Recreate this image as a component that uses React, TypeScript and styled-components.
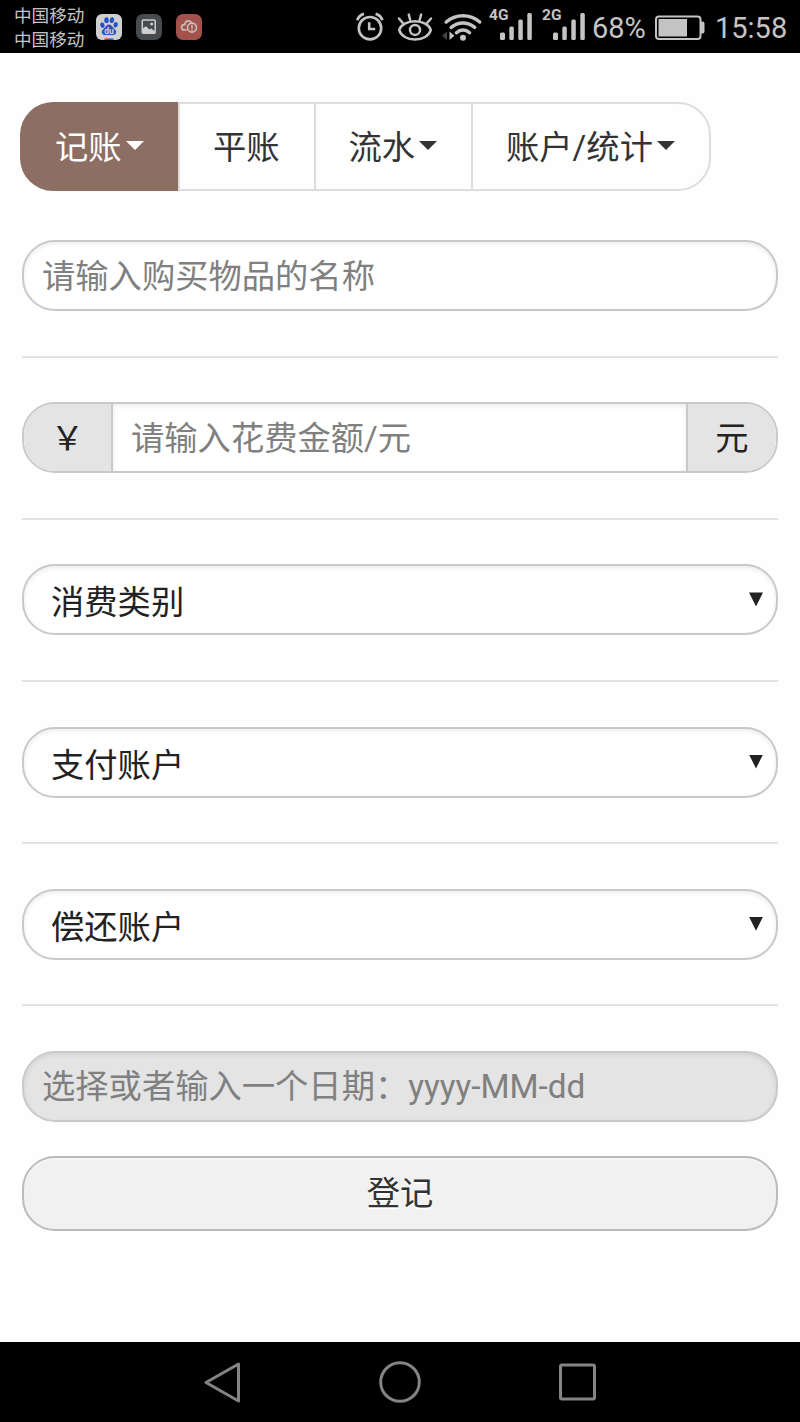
import React from 'react';
import styled, { createGlobalStyle } from 'styled-components';

const GlobalStyle = createGlobalStyle`
  * { box-sizing: border-box; }
  body {
    margin: 0;
    background: #fefefe;
    font-family: Roboto, 'Noto Sans CJK SC', sans-serif;
    font-size: 33.3px;
    color: #222;
  }
  input, button, select { font: inherit; color: inherit; margin: 0; outline: none; }
`;

const Screen = styled.div`
  width: 800px;
  height: 1422px;
  display: flex;
  flex-direction: column;
  overflow: hidden;
`;

const StatusBar = styled.header`
  height: 53px;
  flex: none;
  background: #000;
  color: #c4c4c4;
  display: flex;
  justify-content: space-between;
  padding: 0 12px 0 14px;
`;

const StatusGroup = styled.div`
  display: flex;
  align-items: center;
`;

const Carriers = styled.div`
  font-size: 17.6px;
  line-height: 24px;
  width: 72px;
  margin-right: 10px;
  padding-top: 2px;
  white-space: nowrap;
`;

const Notifications = styled.div`
  display: flex;
  gap: 14px;
`;

const Slot = styled.div<{ $w: number; $gap?: number }>`
  width: ${(p) => p.$w}px;
  margin-left: ${(p) => p.$gap ?? 0}px;
  height: 53px;
  flex: none;
  svg { display: block; }
`;

const SignalSlot = styled(Slot)`
  display: flex;
  align-items: flex-start;
`;

const Network = styled.span`
  width: 20px;
  margin-right: -9px;
  flex: none;
  font: 700 15.5px/16px Roboto, sans-serif;
  padding-top: 7px;
`;

const StatusText = styled.span<{ $w: number; $gap: number }>`
  width: ${(p) => p.$w}px;
  margin-left: ${(p) => p.$gap}px;
  font-size: 29px;
  line-height: 34px;
  padding-top: 3px;
  white-space: nowrap;
`;

const Page = styled.main`
  flex: 1;
  padding: 49px 22px 0;
`;

const Tabs = styled.nav`
  display: flex;
  width: 691px;
  height: 89px;
  margin: 0 0 49px -2px;
`;

const Tab = styled.button<{ $w: number; $active?: boolean }>`
  width: ${(p) => p.$w}px;
  height: 89px;
  flex: none;
  display: flex;
  align-items: center;
  padding: 0 0 4px ${(p) => (p.$active ? 35 : 33)}px;
  white-space: nowrap;
  color: ${(p) => (p.$active ? '#fff' : '#333')};
  background: ${(p) => (p.$active ? '#8c6e63' : 'transparent')};
  border: solid ${(p) => (p.$active ? '#8c6e63' : '#ddd')};
  border-width: ${(p) => (p.$active ? '0' : '2px 0 2px 2px')};
  &:first-child { border-radius: 33px 0 0 33px; }
  &:last-child { border-right-width: 2px; border-radius: 0 33px 33px 0; }
`;

const Caret = styled.i`
  margin: 2px 0 0 4px;
  border: 9px solid transparent;
  border-top-color: currentColor;
  border-bottom: 0;
`;

const fieldShape = `
  display: block;
  width: 100%;
  height: 71px;
  border: 2px solid #c9c9c9;
  border-radius: 33px;
`;

const innerShadow = 'box-shadow: inset 0 2px 5px rgba(0, 0, 0, 0.08);';

const Field = styled.input`
  ${fieldShape}
  ${innerShadow}
  padding: 1px 18px 0;
  background: #fff;
  &::placeholder { color: #808080; opacity: 1; }
  &:disabled { background: #e4e4e4; }
`;

const Divider = styled.hr`
  height: 2px;
  border: 0;
  background: #e3e3e3;
  margin: 44.6px 0;
`;

const AmountGroup = styled.div`
  ${fieldShape}
  display: flex;
  overflow: hidden;
`;

const AmountField = styled.input`
  flex: 1;
  min-width: 0;
  border: solid #c9c9c9;
  border-width: 0 2px;
  padding: 1px 18px 0;
  background: #fff;
  ${innerShadow}
  &::placeholder { color: #808080; opacity: 1; }
`;

const Addon = styled.span<{ $w: number }>`
  width: ${(p) => p.$w}px;
  flex: none;
  display: flex;
  align-items: center;
  justify-content: center;
  padding-bottom: 4px;
  background: #e4e4e4;
`;

const SelectBox = styled.div`
  ${fieldShape}
  ${innerShadow}
  display: flex;
  align-items: center;
  justify-content: space-between;
  padding: 0 13px 0 27px;
  background: #fff;
`;

const SelectArrow = styled.i`
  width: 14px;
  height: 14px;
  margin-top: -1px;
  background: #222;
  clip-path: polygon(0 0, 100% 0, 50% 100%);
`;

const Submit = styled.button`
  display: block;
  width: 100%;
  height: 75px;
  margin-top: 34px;
  padding: 0 0 5px;
  color: #333;
  background: #f1f1f1;
  border: 2px solid #bbb;
  border-radius: 33px;
  box-shadow: inset 0 2px 0 rgba(255, 255, 255, 0.4);
  text-shadow: 0 2px 0 #fff;
`;

const NavBar = styled.footer`
  height: 80px;
  flex: none;
  background: #000;
  display: flex;
  justify-content: center;
  gap: 134px;
  align-items: center;
`;

const BaiduIcon = () => (
  <svg width="26" height="26" viewBox="0 0 26 26">
    <rect width="26" height="26" rx="6" fill="#cfcfcf" />
    <path d="M8.5 24.500h4.500v1.500H8.500z" fill="#d22" />
    <path d="M13 24.500h4.500v1.500H13z" fill="#2a5bd0" />
    <g fill="#2453c6">
      <ellipse cx="6.400" cy="11.200" rx="2.100" ry="2.700" transform="rotate(-15 6.4 11.2)" />
      <ellipse cx="10.500" cy="6.200" rx="2.200" ry="2.900" />
      <ellipse cx="15.900" cy="6.200" rx="2.200" ry="2.900" transform="rotate(10 15.9 6.2)" />
      <ellipse cx="19.700" cy="10.800" rx="2.100" ry="2.700" transform="rotate(15 19.7 10.8)" />
      <path d="M13 10.400c2.200 0 3 2 4.500 3.500 1.800 1.700 3.300 3 2.600 5-.8 2.400-3.600 2.200-7.100 2-3.500.2-6.300.4-7.100-2-.7-2 .8-3.300 2.600-5 1.500-1.500 2.300-3.500 4.500-3.500z" />
    </g>
    <text x="13" y="20" textAnchor="middle" fontFamily="Roboto" fontWeight="700" fontSize="8.500" fill="#d6d6d6">du</text>
  </svg>
);

const GalleryIcon = () => (
  <svg width="26" height="26" viewBox="0 0 26 26">
    <rect width="26" height="26" rx="7" fill="#454b4e" />
    <rect x="6.300" y="6" width="12.900" height="13.200" rx="1" fill="none" stroke="#cecece" strokeWidth="1.500" />
    <path d="M6.500 14.500l3.500-2.200 3.500 3.200 1.800-1 3.700 3V19H6.500z" fill="#cecece" />
    <circle cx="15.700" cy="9.900" r="1.500" fill="#cecece" />
  </svg>
);

const CloudIcon = () => (
  <svg width="26" height="26" viewBox="0 0 26 26" fill="none" stroke="#cbbdbb" strokeWidth="1.600" strokeLinecap="round">
    <rect width="26" height="26" rx="7" fill="#a3524b" stroke="none" />
    <path d="M10.200 16H8.400a2.700 2.700 0 0 1-.2-5.400h.6c.3-2.300 1.700-3.700 3.600-3.700 1.700 0 2.900.9 3.400 2.200" />
    <circle cx="16" cy="13.600" r="4.500" />
    <path d="M16 11.400v2.600M16 15.900v.1" />
  </svg>
);

const AlarmIcon = () => (
  <svg width="28" height="53" viewBox="0 0 28 53" fill="none" stroke="#c4c4c4" strokeWidth="2.600">
    <circle cx="14" cy="28.200" r="11.200" />
    <path d="M13.200 22.300v6.700h6" />
    <path d="M1.200 20.200C2.300 17 4.600 14.800 8 13.900M26.400 20.200c-1.100-3.200-3.400-5.400-6.800-6.300" strokeWidth="2.800" />
  </svg>
);

const EyeIcon = () => (
  <svg width="36" height="53" viewBox="0 0 36 53" fill="none" stroke="#c4c4c4" strokeWidth="2.500" strokeLinecap="round">
    <path d="M2.200 29.900C3.800 24.700 10.500 21.300 18 21.300s14.200 3.400 15.800 8.600C32.200 35.800 25.500 39.600 18 39.600S3.800 35.800 2.200 29.900z" />
    <circle cx="18" cy="29.900" r="5" />
    <path d="M5.600 22.800L2 18.500M13.200 20l-1.400-5.400M22.600 20l1.500-5.400M30.300 22.800l3.700-4.300" />
  </svg>
);

const WifiIcon = () => (
  <svg width="41" height="53" viewBox="0 0 41 53" fill="none" stroke="#c4c4c4" strokeWidth="3.500" strokeLinecap="round">
    <path d="M4.200 22c9.500-8.500 24-8.500 33.500 0M9.200 27.300c7-5.900 16.500-5.900 23.500 0M14.400 32.700c4-3.500 9.200-3.500 13.200 0" />
    <circle cx="21" cy="37.800" r="3" fill="#c4c4c4" stroke="none" />
    <path d="M5 31.500v8.500L0 35.700z" fill="#444" stroke="none" />
    <path d="M7.500 31.500v8.500l5-4.300z" fill="#c4c4c4" stroke="none" />
  </svg>
);

const SignalBars = () => (
  <svg width="33" height="53" viewBox="0 0 33 53" fill="#c4c4c4">
    <rect x="0" y="32.500" width="5" height="7.500" rx="1.500" />
    <rect x="9.300" y="26.500" width="4.500" height="13.500" rx="1.500" />
    <rect x="18.300" y="19.500" width="4.500" height="20.500" rx="1.500" />
    <rect x="27.300" y="13" width="4.500" height="27" rx="1.500" />
  </svg>
);

const BatteryIcon = () => (
  <svg width="50" height="53" viewBox="0 0 50 53">
    <rect x="1" y="16.500" width="44.500" height="22.500" rx="3" fill="none" stroke="#c4c4c4" strokeWidth="2" />
    <rect x="3.500" y="19" width="28.500" height="17.500" fill="#c4c4c4" />
    <path d="M46 21.500h1.500a2 2 0 0 1 2 2v8a2 2 0 0 1-2 2H46z" fill="#c4c4c4" />
  </svg>
);

const TABS = [
  { label: '记账', width: 158, menu: true, active: true },
  { label: '平账', width: 135.500 },
  { label: '流水', width: 157.500, menu: true },
  { label: '账户/统计', width: 240, menu: true },
];

const SELECTS = ['消费类别', '支付账户', '偿还账户'];

export default function App() {
  return (
    <Screen>
      <GlobalStyle />
      <StatusBar>
        <StatusGroup>
          <Carriers>
            <div>中国移动</div>
            <div>中国移动</div>
          </Carriers>
          <Notifications>
            <BaiduIcon />
            <GalleryIcon />
            <CloudIcon />
          </Notifications>
        </StatusGroup>
        <StatusGroup>
          <Slot $w={28}><AlarmIcon /></Slot>
          <Slot $w={36} $gap={13}><EyeIcon /></Slot>
          <Slot $w={41} $gap={9}><WifiIcon /></Slot>
          <SignalSlot $w={44} $gap={6}>
            <Network>4G</Network>
            <SignalBars />
          </SignalSlot>
          <SignalSlot $w={44} $gap={9}>
            <Network>2G</Network>
            <SignalBars />
          </SignalSlot>
          <StatusText $w={54} $gap={6}>68%</StatusText>
          <Slot $w={50} $gap={9}><BatteryIcon /></Slot>
          <StatusText $w={73} $gap={10}>15:58</StatusText>
        </StatusGroup>
      </StatusBar>

      <Page>
        <Tabs>
          {TABS.map((tab) => (
            <Tab key={tab.label} $w={tab.width} $active={tab.active}>
              {tab.label}
              {tab.menu && <Caret />}
            </Tab>
          ))}
        </Tabs>

        <Field placeholder="请输入购买物品的名称" />
        <Divider />
        <AmountGroup>
          <Addon $w={87}>￥</Addon>
          <AmountField placeholder="请输入花费金额/元" />
          <Addon $w={88}>元</Addon>
        </AmountGroup>
        <Divider />
        {SELECTS.map((label) => (
          <React.Fragment key={label}>
            <SelectBox role="combobox">
              <span>{label}</span>
              <SelectArrow />
            </SelectBox>
            <Divider />
          </React.Fragment>
        ))}
        <Field disabled placeholder="选择或者输入一个日期：yyyy-MM-dd" />
        <Submit>登记</Submit>
      </Page>

      <NavBar>
        <svg width="42" height="44" viewBox="0 0 42 44" fill="none" stroke="#848484" strokeWidth="3" strokeLinejoin="round">
          <path d="M36.500 4v37L4 22.500z" />
        </svg>
        <svg width="44" height="44" viewBox="0 0 44 44" fill="none" stroke="#848484" strokeWidth="3">
          <circle cx="22" cy="22" r="19.300" />
        </svg>
        <svg width="42" height="44" viewBox="0 0 42 44" fill="none" stroke="#848484" strokeWidth="3">
          <rect x="4.500" y="5" width="34" height="34" rx="1.500" />
        </svg>
      </NavBar>
    </Screen>
  );
}
